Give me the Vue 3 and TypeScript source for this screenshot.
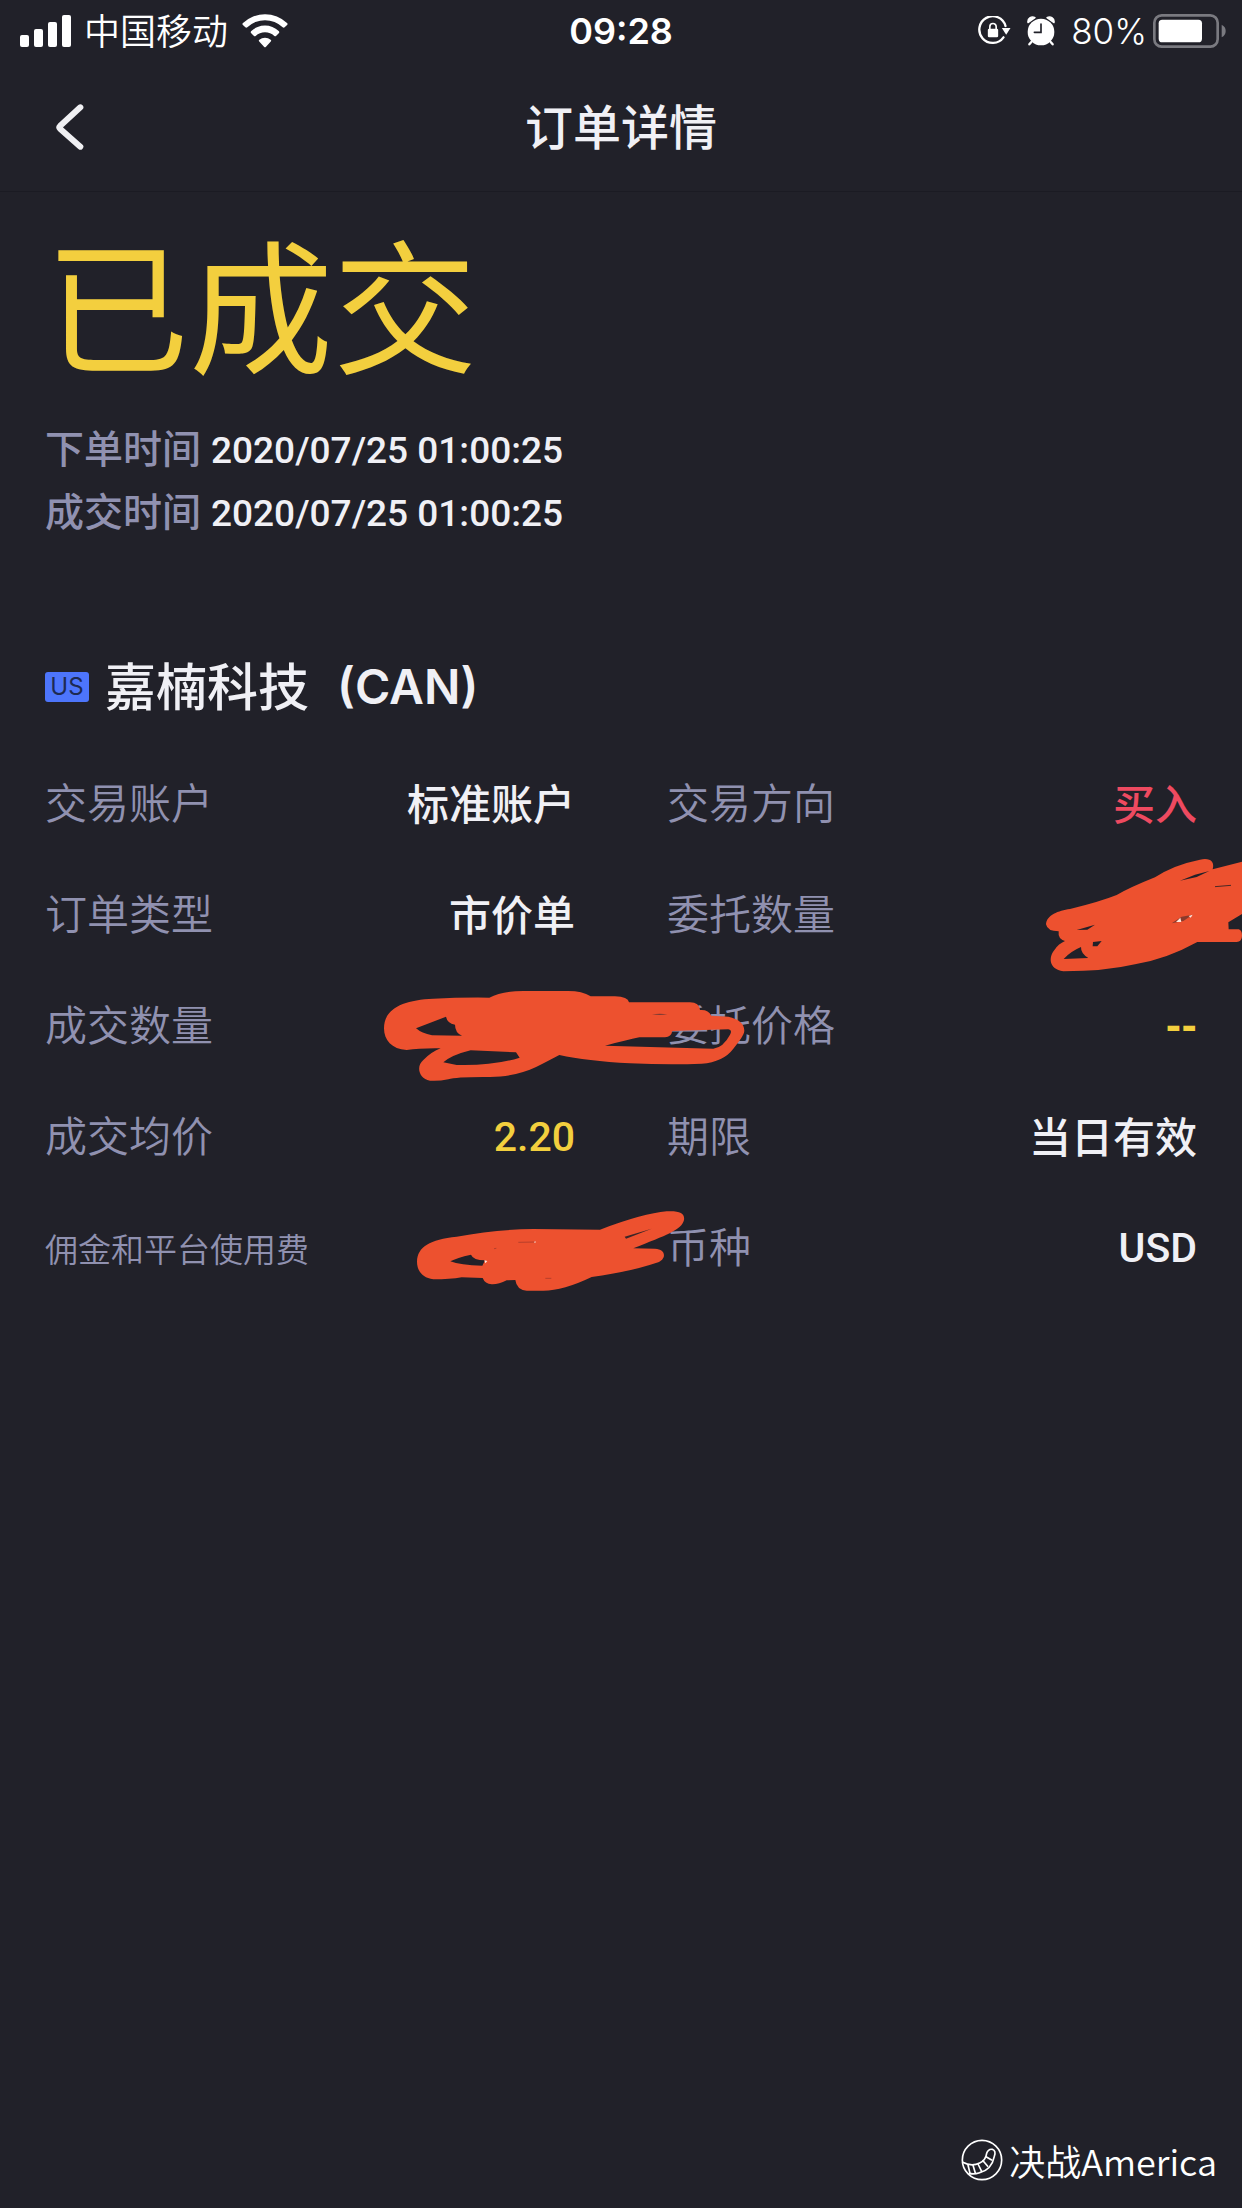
<script setup lang="ts">
type Mark = 'quantity' | 'filled' | 'fee'

interface Field {
  label: string
  value?: string
  kind?: string
  small?: boolean
  mark?: Mark
}

const times = [
  { label: '下单时间', value: '2020/07/25 01:00:25', iso: '2020-07-25T01:00:25' },
  { label: '成交时间', value: '2020/07/25 01:00:25', iso: '2020-07-25T01:00:25' },
]

const fields: Field[] = [
  { label: '交易账户', value: '标准账户' },
  { label: '交易方向', value: '买入', kind: 'up' },
  { label: '订单类型', value: '市价单' },
  { label: '委托数量', mark: 'quantity' },
  { label: '成交数量', mark: 'filled' },
  { label: '委托价格', value: '--', kind: 'accent blank' },
  { label: '成交均价', value: '2.20', kind: 'accent latin' },
  { label: '期限', value: '当日有效' },
  { label: '佣金和平台使用费', small: true, mark: 'fee' },
  { label: '币种', value: 'USD', kind: 'latin' },
]
</script>

<template>
  <div class="screen">
    <div class="status-bar">
      <div class="status-side">
        <svg class="signal" viewBox="0 0 51 32" aria-hidden="true">
          <rect x="0" y="20" width="9" height="12" rx="2" />
          <rect x="14" y="14" width="9" height="18" rx="2" />
          <rect x="28" y="7" width="9" height="25" rx="2" />
          <rect x="42" y="0" width="9" height="32" rx="2" />
        </svg>
        <span class="carrier">中国移动</span>
        <svg class="wifi" viewBox="0 0 138 102" aria-hidden="true">
          <path d="M2 32Q0 30 3 27A96 96 0 0 1 135 27Q138 30 136 32L128 40Q125 42 122 40A76 76 0 0 0 16 40Q13 42 10 40Z" />
          <path d="M27 57Q25 54 28 51A59 59 0 0 1 110 51Q113 54 111 57L102 66Q100 68 97 66A41 41 0 0 0 41 66Q38 68 36 66Z" />
          <path d="M51 82Q49 79 52 77A27 27 0 0 1 86 77Q89 79 87 82L72 98Q69 101 66 98Z" />
        </svg>
      </div>
      <time class="clock">09:28</time>
      <div class="status-side status-end">
        <svg class="lock" viewBox="0 0 98 90" aria-hidden="true">
          <path d="M76 64A40 40 0 1 1 82 30" fill="none" stroke="#fff" stroke-width="7" stroke-linecap="round" />
          <path d="M71 36H97L84 56Z" />
          <rect x="29" y="38" width="31" height="26" rx="4" />
          <path d="M35 40V32A9 9 0 0 1 54 32V40" fill="none" stroke="#fff" stroke-width="5" />
        </svg>
        <svg class="alarm" viewBox="0 0 84 88" aria-hidden="true">
          <circle cx="42" cy="47" r="40" />
          <path d="M3 19A14 14 0 0 1 24 4ZM60 4A14 14 0 0 1 81 19Z" stroke="#fff" stroke-width="4" stroke-linejoin="round" />
          <path d="M13 77L7 84M71 77L77 84" stroke="#fff" stroke-width="7" stroke-linecap="round" />
          <path d="M42 23V48H22" fill="none" stroke="#212129" stroke-width="5" stroke-linecap="round" />
        </svg>
        <span class="percent">80%</span>
        <svg class="battery" viewBox="0 0 219 102" aria-hidden="true">
          <rect x="4" y="4" width="190" height="94" rx="22" fill="none" stroke="#7a7a80" stroke-width="8" />
          <rect x="17" y="17" width="130" height="68" rx="11" />
          <path d="M206 32Q218 38 218 51T206 70Z" fill="#7a7a80" />
        </svg>
      </div>
    </div>

    <header class="nav">
      <button class="back" type="button" aria-label="返回">
        <svg viewBox="0 0 84 138" aria-hidden="true">
          <path d="M73 10L12 66Q8 70 12 74L73 128" fill="none" stroke="#f0f0f3" stroke-width="18" stroke-linecap="round" stroke-linejoin="round" />
        </svg>
      </button>
      <h1>订单详情</h1>
    </header>

    <main>
      <p class="state">已成交</p>
      <dl class="times">
        <div v-for="t in times" :key="t.label" class="time-row">
          <dt>{{ t.label }}</dt>
          <dd><time :datetime="t.iso">{{ t.value }}</time></dd>
        </div>
      </dl>

      <h2 class="stock">
        <span class="market">US</span>
        <span class="name">嘉楠科技</span>
        <span class="ticker">(CAN)</span>
      </h2>

      <dl class="fields">
        <div v-for="f in fields" :key="f.label" class="field">
          <dt :class="{ small: f.small }">{{ f.label }}</dt>
          <dd :class="f.kind">
            {{ f.value }}
            <svg v-if="f.mark === 'filled'" class="mark filled" viewBox="36 84 1098 288" aria-hidden="true">
              <path fill-rule="evenodd" d="M42 205C42 145 100 120 190 116Q270 112 358 113Q395 93 460 93H590Q635 92 662 109H735Q774 110 777 127H960Q988 128 990 150Q1015 148 1024 167L1075 170Q1122 180 1123 212C1122 225 1110 240 1090 266Q1060 306 995 311Q900 315 780 310Q650 303 568 285C510 315 460 350 360 351Q260 350 235 358Q205 364 180 362C145 355 138 318 160 300Q185 275 212 265Q150 264 110 270C65 268 42 240 42 205ZM138 205L228 170Q232 190 255 194Q255 218 276 227L186 226Q155 220 138 205ZM220 307Q245 285 302 271L438 277L449 293Q370 318 260 315ZM705 257Q770 240 808 232H885Q904 230 907 213L1075 208Q1088 210 1080 224Q1060 262 1030 266Z" />
              <path d="M846 163Q870 159 892 163Q870 167 846 163Z" fill="#7c3b33" />
            </svg>
            <svg v-if="f.mark === 'fee'" class="mark fee" viewBox="72 54 822 255" aria-hidden="true">
              <path fill-rule="evenodd" d="M81 215C82 170 120 148 200 140Q320 118 430 117L630 119Q760 70 830 64C870 62 885 70 882 90C875 120 830 135 730 175L795 176C830 177 830 210 800 218Q720 245 605 261Q520 302 460 302H410Q380 300 376 270L350 271Q325 284 305 283Q285 282 278 264L215 262Q180 268 130 268C95 263 81 240 81 215ZM181 214Q200 203 243 194Q250 211 285 211L277 227Q210 226 181 214Z" />
              <path d="M704 140L785 116L708 146Z" fill="#3a2628" />
              <path d="M385 157L435 156M312 176L319 175M466 265L484 265" fill="none" stroke="#b83f2a" stroke-width="3" />
              <path d="M283 211L292 213L286 220ZM431 156L437 154L436 159Z" fill="#ffe5da" />
            </svg>
            <svg v-if="f.mark === 'quantity'" class="mark quantity" viewBox="132 291 594 351" aria-hidden="true">
              <path fill-rule="evenodd" d="M138 493C140 465 175 452 210 447Q300 425 350 405Q390 382 465 352Q520 315 600 299C630 292 645 305 638 328L726 305V462L685 487L686 508H716Q726 510 726 527Q726 545 710 546H592Q500 597 405 613Q315 634 190 634C145 628 145 590 165 568Q175 552 195 543Q173 537 176 514Q142 514 138 493ZM191 597Q210 575 243 561Q242 580 265 594ZM279 546L305 543L292 559H278Z" />
              <path d="M540 362L585 344L628 333L590 351ZM230 510L285 494L262 509Z" fill="#212129" />
              <path d="M645 380L693 376" stroke="#4a2926" stroke-width="3" />
              <path d="M515 490L545 470L578 464L550 483Z" fill="#8a3a2c" />
              <path d="M528 486L541 473L544 486ZM566 468L578 464L572 473Z" fill="#ffe8df" />
            </svg>
          </dd>
        </div>
      </dl>
    </main>

    <footer class="signature">
      <svg viewBox="0 0 126 126" aria-hidden="true">
        <circle cx="63" cy="63" r="59" />
        <path d="M5 70Q32 84 56 72Q74 64 77 43Q82 29 94 31Q106 35 100 52Q92 92 56 101Q38 107 25 103" />
        <path d="M21 78L27 103M36 79L43 102M51 75L62 97M66 65L80 82M75 53L92 63" />
      </svg>
      <span>决战America</span>
    </footer>
  </div>
</template>

<style>
body {
  margin: 0;
  background: #212129;
}
</style>

<style scoped>
.screen {
  display: flex;
  flex-direction: column;
  min-height: 100vh;
  overflow-x: hidden;
  background: #212129;
  color: #f0f0f5;
  font-family: "Noto Sans CJK SC", sans-serif;
}

h1, h2, p, dl, dd {
  margin: 0;
}

svg {
  display: block;
  flex: none;
  fill: #fff;
}

.status-bar {
  display: flex;
  align-items: center;
  height: 62px;
  padding: 0 16px;
  color: #fff;
}

.status-side {
  display: flex;
  flex: 1;
  align-items: center;
}

.status-end {
  justify-content: flex-end;
}

.signal {
  width: 51px;
  height: 32px;
  margin-left: 4px;
}

.carrier {
  margin: 0 14px 0 13px;
  padding-bottom: 4px;
  font-size: 36px;
  font-weight: 350;
  line-height: 56px;
}

.wifi {
  width: 46px;
  height: 34px;
}

.clock {
  font: 600 36px/60px Inter, sans-serif;
}

.lock {
  width: 33px;
  height: 30px;
}

.alarm {
  width: 28px;
  height: 30px;
  margin: 0 16px;
}

.percent {
  margin-right: 6px;
  font: 350 35px/60px Inter, sans-serif;
}

.battery {
  width: 73px;
  height: 34px;
}

.nav {
  display: grid;
  grid-template-columns: 1fr auto 1fr;
  align-items: center;
  height: 129px;
  border-bottom: 1px solid #1b1b23;
}

.back {
  justify-self: start;
  padding: 16px 32px 16px 56px;
  border: 0;
  background: none;
  cursor: pointer;
}

.back svg {
  width: 28px;
  height: 46px;
}

h1 {
  padding-bottom: 6px;
  font-size: 48px;
  font-weight: 500;
  line-height: 66px;
}

main {
  flex: 1;
  padding: 28px 45px 0;
}

.state {
  color: #f3cf3e;
  font-size: 144px;
  line-height: 160px;
}

.times {
  margin-top: 35px;
}

.time-row {
  display: flex;
  align-items: baseline;
  gap: 10px;
  height: 63px;
  font-size: 39px;
  font-weight: 500;
  line-height: 63px;
}

.time-row dt {
  color: #9091b0;
}

.time-row dd {
  font-family: Roboto, sans-serif;
  font-size: 37px;
}

.stock {
  display: flex;
  align-items: center;
  margin-top: 111px;
  font-size: 51px;
  font-weight: 500;
}

.name {
  padding-bottom: 6px;
  line-height: 64px;
}

.market {
  width: 44px;
  margin-right: 16px;
  border-radius: 3px;
  background: #4d75fb;
  color: #1d2a52;
  font: 400 24px/30px Inter, sans-serif;
  text-align: center;
}

.ticker {
  margin-left: 28px;
  font: 600 48px/70px Inter, sans-serif;
}

.fields {
  display: grid;
  grid-template-columns: 1fr 1fr;
  column-gap: 92px;
  margin-top: 26px;
}

.field {
  position: relative;
  display: flex;
  align-items: center;
  justify-content: space-between;
  height: 111px;
  font-size: 42px;
  line-height: 54px;
}

.field dt {
  padding-bottom: 6px;
  color: #9091b0;
  font-weight: 350;
}

.field dt.small {
  padding: 0;
  font-size: 33px;
}

.field dd {
  padding-bottom: 4px;
  font-weight: 500;
}

.field dd.up {
  color: #ee4a60;
}

.field dd.accent {
  color: #f3cf3e;
}

.field dd.latin {
  padding: 0;
  font-family: Roboto, sans-serif;
  font-size: 41px;
}

.field dd.blank {
  padding: 0;
  font-family: "DejaVu Sans", sans-serif;
  font-size: 38px;
  font-weight: 700;
}

.mark {
  position: absolute;
  z-index: 1;
  fill: #ed512f;
}

.filled {
  top: 18px;
  right: -173px;
  width: 366px;
  height: 96px;
}

.fee {
  top: 16px;
  right: -113px;
  width: 274px;
  height: 85px;
}

.quantity {
  top: -2px;
  right: -45px;
  width: 198px;
  height: 117px;
}

.signature {
  display: flex;
  align-items: center;
  justify-content: flex-end;
  gap: 6px;
  padding: 0 25px 18px;
  color: #fff;
  font-size: 36px;
  font-weight: 350;
  line-height: 60px;
}

.signature svg {
  width: 42px;
  height: 42px;
  fill: none;
  stroke: #fff;
  stroke-width: 5;
  stroke-linecap: round;
  stroke-linejoin: round;
}
</style>
